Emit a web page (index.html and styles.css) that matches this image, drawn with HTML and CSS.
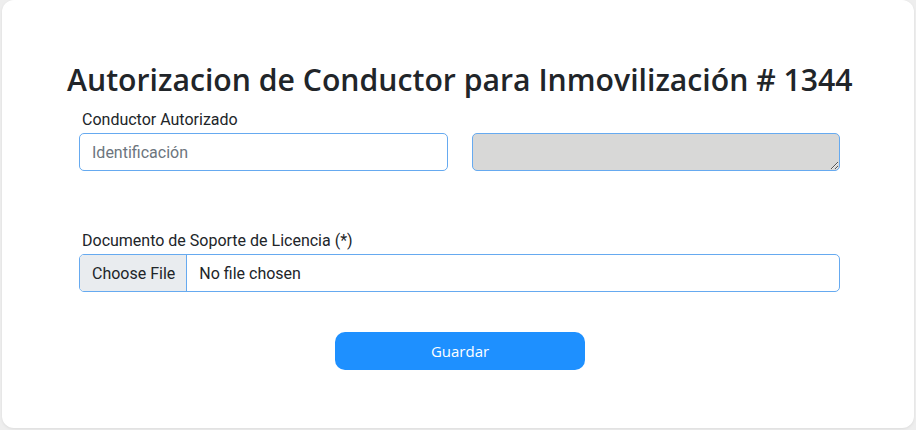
FILE: index.html
```html
<!DOCTYPE html>
<html lang="es">
<head>
<meta charset="utf-8">
<title>Autorizacion de Conductor</title>
<link rel="stylesheet" href="styles.css">
</head>
<body>
<div class="card">
  <h1 class="title">Autorizacion de Conductor para Inmovilización # 1344</h1>
  <div class="row">
    <div class="col">
      <label class="label">Conductor Autorizado</label>
      <input class="control" type="text" placeholder="Identificación">
    </div>
    <div class="col col-bottom">
      <textarea class="control area" rows="1" disabled></textarea>
    </div>
  </div>
  <div class="row row-file">
    <div class="col col-full">
      <label class="label">Documento de Soporte de Licencia (*)</label>
      <div class="file">
        <span class="file-btn">Choose File</span>
        <span class="file-name">No file chosen</span>
      </div>
    </div>
  </div>
  <div class="actions">
    <button class="btn" type="button">Guardar</button>
  </div>
</div>
</body>
</html>
```
FILE: styles.css
```css
html, body {
  margin: 0;
  padding: 0;
}
body {
  background: #eeeeee;
  width: 916px;
  height: 430px;
  overflow: hidden;
}
.card {
  box-sizing: border-box;
  margin: 0 2px 2px 2px;
  height: 428px;
  background: #ffffff;
  border-radius: 12px;
  box-shadow: 0 1px 3px rgba(0,0,0,0.08);
  padding: 59px 62px 0 65px;
  font-family: Roboto, "Liberation Sans", sans-serif;
  color: #212529;
}
.title {
  margin: 0;
  font-family: "Open Sans", "Noto Sans", sans-serif;
  font-weight: 600;
  font-size: 30.2px;
  line-height: 42px;
  text-align: center;
  color: #212529;
  white-space: nowrap;
}
.row {
  display: flex;
}
.col {
  flex: 1;
  padding: 0 12px;
  display: flex;
  flex-direction: column;
}
.col-bottom {
  justify-content: flex-end;
}
.label {
  font-size: 16px;
  line-height: 24px;
  padding-left: 3px;
  margin-top: 7px;
  margin-bottom: 1px;
}
.control {
  box-sizing: border-box;
  height: 38px;
  width: 100%;
  border: 1px solid #66aaf0;
  border-radius: 5px;
  padding: 6px 12px;
  font-family: Roboto, "Liberation Sans", sans-serif;
  font-size: 16px;
  color: #212529;
  background: #fff;
  outline: none;
  margin: 0;
}
.control::placeholder {
  color: #6c757d;
}
.area {
  background: #d8d8d7;
  resize: vertical;
  display: block;
}
.row-file {
  margin-top: 51px;
}
.file {
  box-sizing: border-box;
  height: 38px;
  display: flex;
  border: 1px solid #66aaf0;
  border-radius: 5px;
  overflow: hidden;
  font-size: 16px;
}
.file-btn {
  background: #e9ecef;
  border-right: 1px solid #66aaf0;
  padding: 0 11px 0 12px;
  display: flex;
  align-items: center;
}
.file-name {
  padding: 0 12px;
  display: flex;
  align-items: center;
}
.actions {
  display: flex;
  justify-content: center;
  margin-top: 40px;
  padding-left: 1px;
}
.btn {
  width: 250px;
  height: 38px;
  border: none;
  border-radius: 10px;
  background: #1e90ff;
  color: #fff;
  font-family: "Open Sans", "Noto Sans", sans-serif;
  font-size: 15px;
}
```
